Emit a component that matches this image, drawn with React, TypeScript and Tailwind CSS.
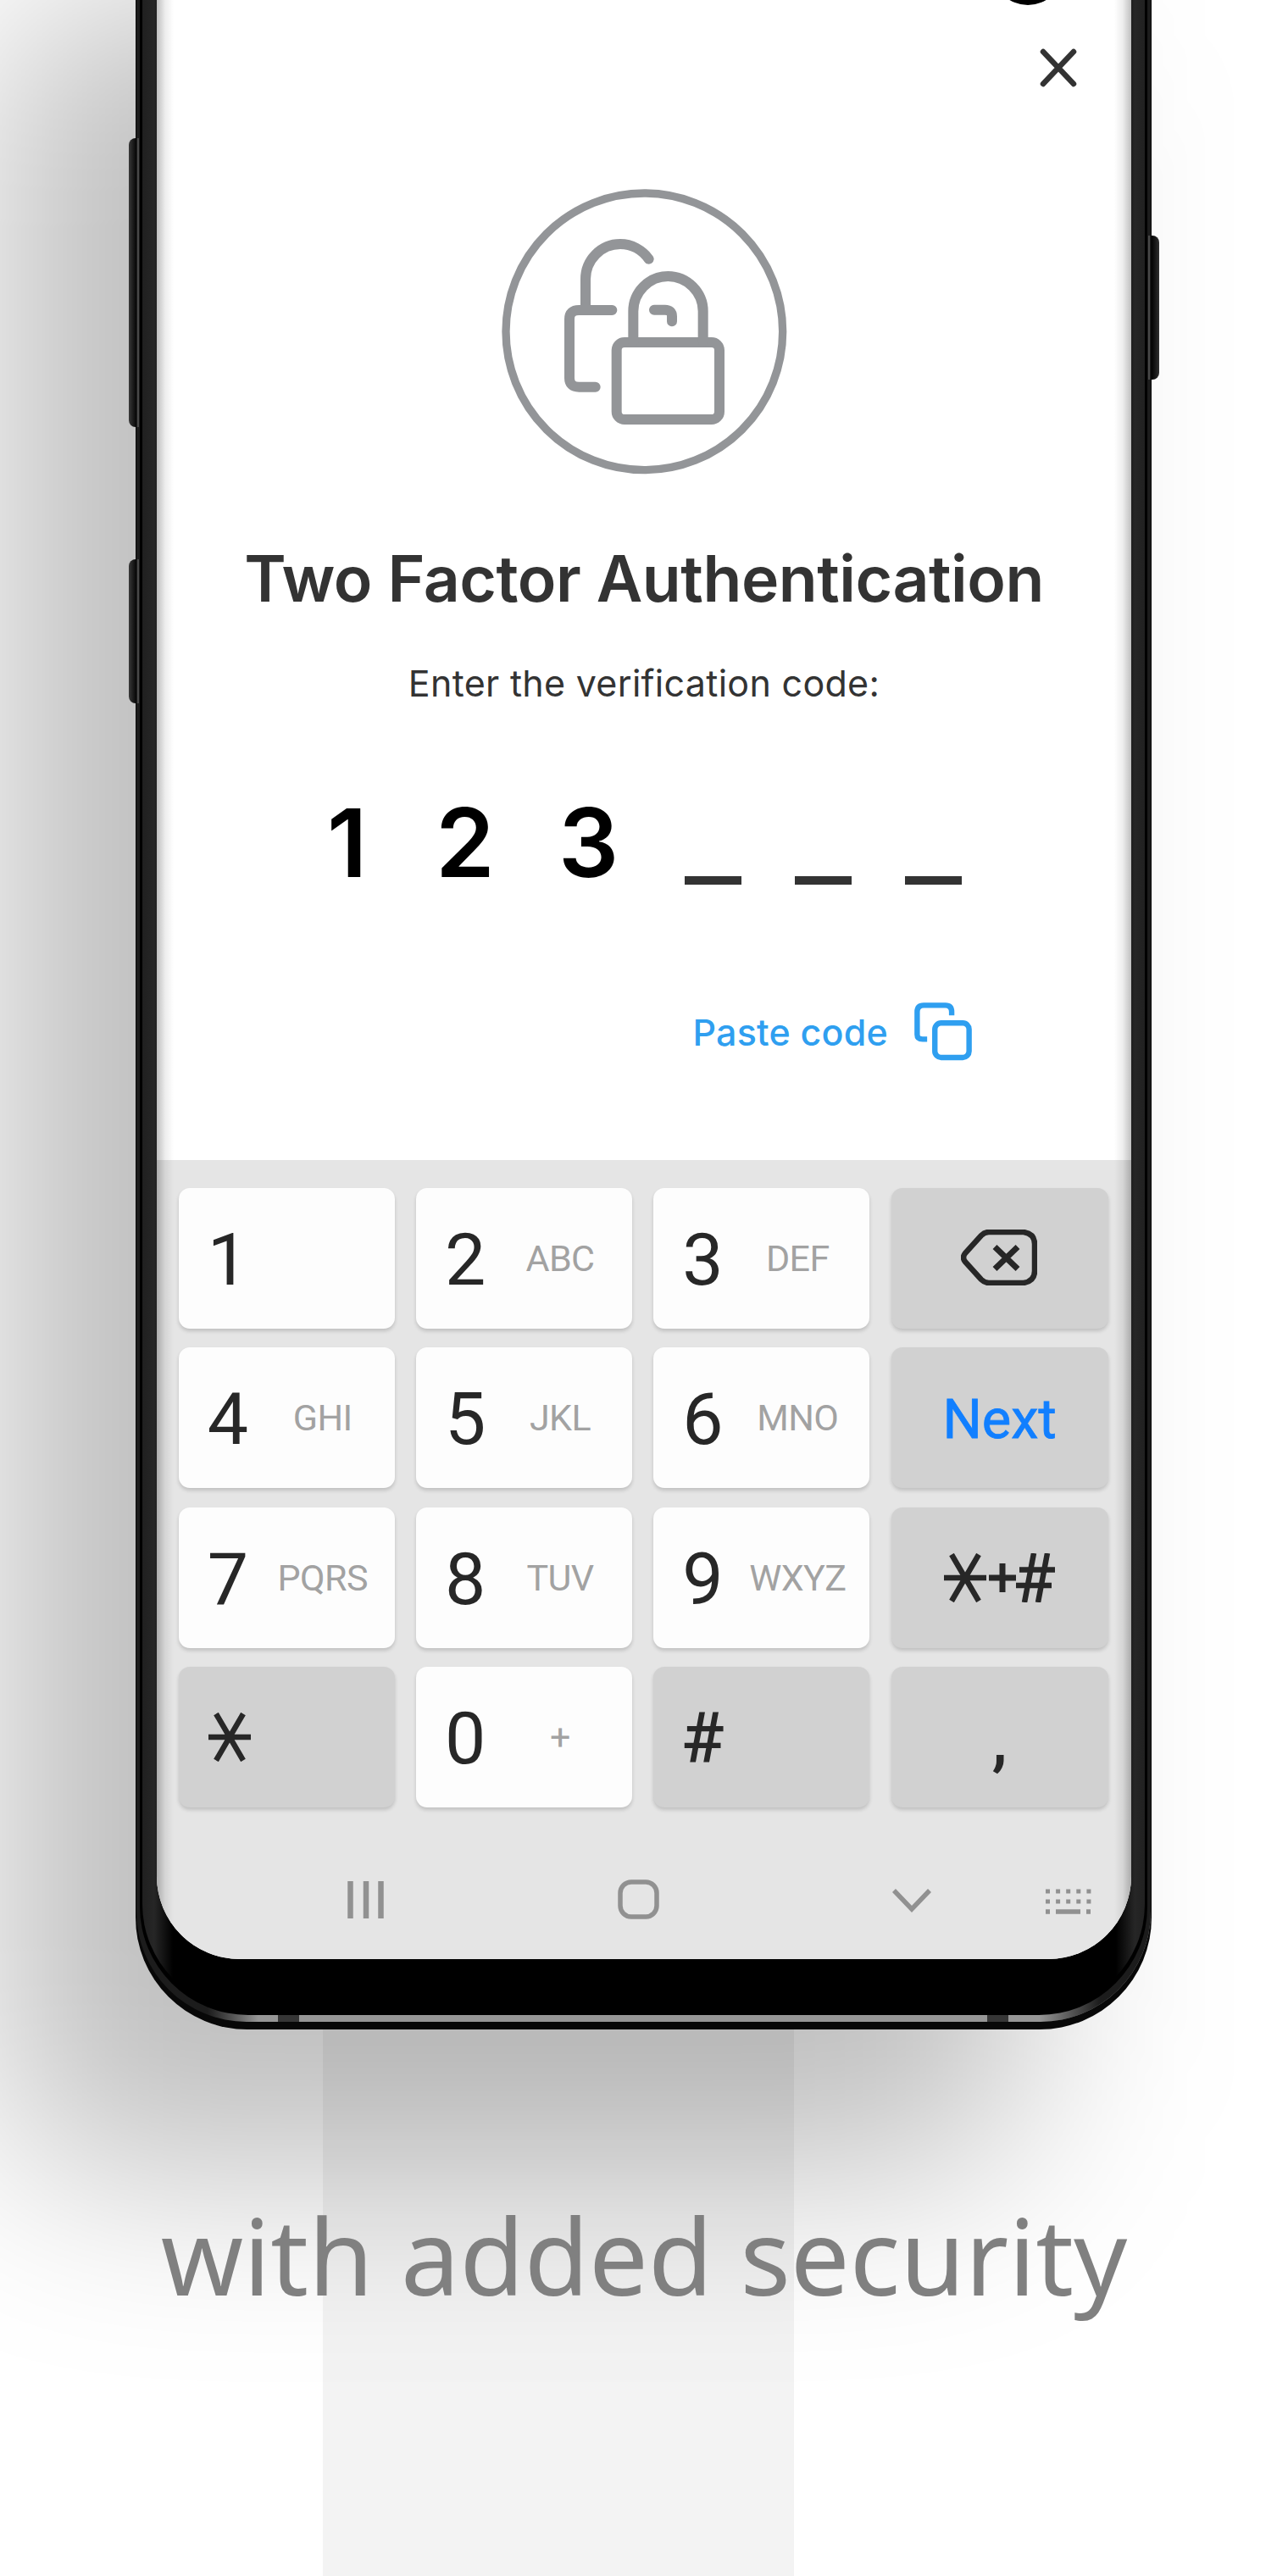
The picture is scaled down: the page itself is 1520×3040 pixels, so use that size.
import React from "react";

type KeyProps = { digit?: string; letters?: string; dark?: boolean; children?: React.ReactNode };

function Star({ className }: { className: string }) {
  return (
    <svg viewBox="0 0 50 58" className={className} stroke="#272727" strokeWidth="6.500" fill="none">
      <path d="M0 29H50M9 1.500L41 56.500M41 1.500L9 56.500" />
    </svg>
  );
}

function Key({ digit, letters, dark, children }: KeyProps) {
  return (
    <div
      className={
        "relative flex h-[166px] items-center rounded-[13px] shadow-[0_3px_4px_rgba(0,0,0,0.16)] " +
        (dark ? "bg-[#d1d1d1]" : "bg-[#fdfdfd]")
      }
    >
      {digit && <span className="mt-[4px] ml-[34px] text-[86px] leading-none font-[450]">{digit}</span>}
      {letters && (
        <span className="absolute top-1/2 left-[170px] -translate-x-1/2 -translate-y-1/2 text-[43px] leading-none tracking-[-0.6px] whitespace-nowrap text-[#a2a2a2]">
          {letters}
        </span>
      )}
      {children}
    </div>
  );
}

function LockBadge() {
  return (
    <svg viewBox="0 0 1200 1140" className="h-[380px] w-[400px] shrink-0" fill="none" stroke="#939598" strokeWidth="36" strokeLinecap="round" strokeLinejoin="round">
      <circle cx="601" cy="574" r="490" strokeWidth="28" />
      <path d="M393 496V388C393 320 448 264 516 264C556 264 593 284 617 317" />
      <path d="M487 498H370Q336 498 336 530V738Q336 770 370 770H428" />
      <rect x="503" y="612" width="364" height="273" rx="28" />
      <path d="M562 608V502C562 435 617 378 685 378C753 378 809 435 809 502V608" />
      <path d="M636 497H674Q699 497 699 520V538" />
    </svg>
  );
}

function Keyboard() {
  return (
    <div className="h-[943px] w-full bg-[#e5e5e5] font-['Roboto',sans-serif] text-[#272727]">
      <div className="grid grid-cols-[255px_255px_255px_256px] gap-x-[25.300px] gap-y-[22.500px] pt-[32.500px] pl-[25.700px]">
        <Key digit="1" />
        <Key digit="2" letters="ABC" />
        <Key digit="3" letters="DEF" />
        <Key dark>
          <svg viewBox="0 0 90 66" className="mb-[2px] ml-[82px] h-[66px] w-[90px]" fill="none" stroke="#272727" strokeWidth="6.500" strokeLinejoin="round">
            <path d="M33 3H74Q87 5 87 17V49Q87 61 74 63H33Q28 63 24 59L5 38Q1 33 5 28L24 7Q28 3 33 3Z" />
            <path d="M40 20.500L67 46.500M67 20.500L40 46.500" strokeWidth="7" />
          </svg>
        </Key>
        <Key digit="4" letters="GHI" />
        <Key digit="5" letters="JKL" />
        <Key digit="6" letters="MNO" />
        <Key dark>
          <span className="mt-[5px] w-full text-center text-[65px] leading-none font-[450] text-[#117fff] [-webkit-text-stroke:0.8px_#117fff]">Next</span>
        </Key>
        <Key digit="7" letters="PQRS" />
        <Key digit="8" letters="TUV" />
        <Key digit="9" letters="WXYZ" />
        <Key dark>
          <Star className="ml-[62px] h-[58px] w-[50px]" />
          <svg viewBox="0 0 32 34" className="ml-[3px] h-[34px] w-[32px]" stroke="#272727" strokeWidth="7">
            <path d="M0 17H32M16 0V34" />
          </svg>
          <svg viewBox="0 0 46 58" className="h-[58px] w-[46px]" fill="none" stroke="#272727" strokeWidth="6.500">
            <path d="M21 0L10 58M37 0L26 58M4 19.500H46M0 38H42" />
          </svg>
        </Key>
        <Key dark>
          <Star className="ml-[35px] h-[58px] w-[50px]" />
        </Key>
        <Key digit="0" letters="+" />
        <Key dark>
          <span className="mt-[4px] ml-[33px] text-[84px] leading-none font-medium">#</span>
        </Key>
        <Key dark>
          <span className="mt-[4px] w-full text-center text-[82px] leading-none font-medium">,</span>
        </Key>
      </div>
      <div className="mt-[80.500px] flex h-[56px] items-center">
        <svg viewBox="0 0 1150 56" className="h-[56px] w-[1150px]" fill="none" stroke="#919191" strokeWidth="6.500">
          <path d="M228.500 6V50M247 6V50M264.500 6V50" />
          <rect x="547" y="7" width="43" height="41" rx="13" strokeWidth="5.500" />
          <path d="M870 17L891 39L912 17" strokeWidth="5.500" />
          <path d="M1049 18H1104M1049 30H1104" strokeWidth="5" strokeDasharray="5 7.100" />
          <path d="M1049 42H1054M1061 42H1090M1097 42H1102" strokeWidth="5.500" />
        </svg>
      </div>
    </div>
  );
}

function Screen() {
  return (
    <div className="relative flex h-[2312px] w-[1150px] flex-col items-center overflow-hidden rounded-b-[98px] bg-white font-['Inter',sans-serif]">
      <div className="absolute -top-[78px] left-[986px] h-[84px] w-[84px] rounded-full bg-black" />
      <svg viewBox="0 0 44 46" className="mt-[57px] mr-[64px] h-[46px] w-[44px] shrink-0 self-end" stroke="#333" strokeWidth="6.500" strokeLinecap="round">
        <path d="M4 4L40 42M40 4L4 42" />
      </svg>
      <div className="mt-[97px] flex h-[380px]">
        <LockBadge />
      </div>
      <h1 className="mt-[58px] h-[90px] text-[75px] leading-[90px] font-semibold tracking-[-0.46px] whitespace-nowrap text-[#333]">Two Factor Authentication</h1>
      <p className="mt-[52px] h-[52px] text-[43px] leading-[52px] tracking-[0.3px] whitespace-nowrap text-[#333]">Enter the verification code:</p>
      <div className="mt-[102px] flex h-[120px] w-full items-start text-[112px] leading-[120px] font-semibold text-black">
        <span className="ml-[201px] w-[128px]">1</span>
        <span className="w-[145px]">2</span>
        <span className="w-[149px]">3</span>
        <div className="mt-[100px] flex gap-[63px]">
          <i className="h-[10px] w-[67px] bg-[#333]" />
          <i className="h-[10px] w-[67px] bg-[#333]" />
          <i className="h-[10px] w-[67px] bg-[#333]" />
        </div>
      </div>
      <div className="mt-[127px] mr-[187px] flex h-[72px] items-center gap-[30px] self-end text-[#2f9ff0]">
        <span className="mt-[2px] text-[43px] font-medium tracking-[0.2px]">Paste code</span>
        <svg viewBox="0 0 208 208" className="h-[70px] w-[70px]" fill="none" stroke="currentColor" strokeWidth="19">
          <path d="M134 48V36Q134 13 112 13H36Q13 13 13 36V116Q13 132 32 132H48" />
          <rect x="75" y="75" width="120" height="121" rx="22" />
        </svg>
      </div>
      <div className="mt-auto w-full">
        <Keyboard />
      </div>
      <div className="absolute inset-y-0 left-0 w-[20px] bg-linear-to-r from-black/25 via-black/7 to-transparent" />
      <div className="absolute inset-y-0 right-0 w-[20px] bg-linear-to-l from-black/25 via-black/7 to-transparent" />
    </div>
  );
}

export default function App() {
  return (
    <div className="relative flex h-[3040px] w-[1520px] flex-col overflow-hidden bg-white">
      <div className="absolute top-0 left-[381px] h-[3040px] w-[556px] bg-[#f3f3f3]" />
      <div className="absolute top-0 left-0 h-[2565px] w-[1210px] rounded-[130px] bg-black/25 blur-[115px]" />
      <div className="relative ml-[160px] h-[2395px] w-[1199px]">
        <div className="absolute top-[163px] -left-[8px] h-[341px] w-[14px] rounded-l-[8px] bg-linear-to-r from-[#3a3a3a] to-black" />
        <div className="absolute top-[660px] -left-[8px] h-[170px] w-[14px] rounded-l-[8px] bg-linear-to-r from-[#3a3a3a] to-black" />
        <div className="absolute top-[278px] -right-[9px] h-[170px] w-[14px] rounded-r-[8px] bg-linear-to-l from-[#303030] to-black" />
        <div className="relative h-[2395px] overflow-hidden rounded-b-[132px] bg-[#080808] px-[1px] pb-[9px]">
          <div className="relative h-full overflow-hidden rounded-b-[130px] px-[4px] pb-[8px]">
            <div className="absolute inset-0 bg-linear-to-r from-[#1c1c1c] from-[7%] via-[#969696] via-[12%] to-[#969696]" />
            <div className="absolute inset-0 bg-linear-to-l from-[#1c1c1c] from-[5%] to-transparent to-[11%]" />
            <div className="absolute bottom-0 left-[167px] h-[10px] w-[25px] bg-[#363636]" />
            <div className="absolute right-[168px] bottom-0 h-[10px] w-[25px] bg-[#363636]" />
            <div className="relative h-full overflow-hidden rounded-b-[128px] bg-black px-[3px] pb-[6px]">
              <div className="h-full rounded-b-[125px] bg-[linear-gradient(90deg,#202020_0px,#262626_14px,#000_36px,#000_1149px,#262626_1171px,#202020_1185px)] pl-[17px]">
                <Screen />
              </div>
            </div>
          </div>
          <div className="absolute top-[163px] left-[2px] h-[341px] w-[2px] bg-[#484848]" />
          <div className="absolute top-[660px] left-[2px] h-[170px] w-[2px] bg-[#484848]" />
          <div className="absolute top-[278px] right-[2px] h-[170px] w-[2px] bg-[#484848]" />
        </div>
      </div>
      <p className="relative mt-[182px] text-center font-['Noto_Sans',sans-serif] text-[124px] leading-[168px] whitespace-nowrap text-[#808080]">with added security</p>
    </div>
  );
}
